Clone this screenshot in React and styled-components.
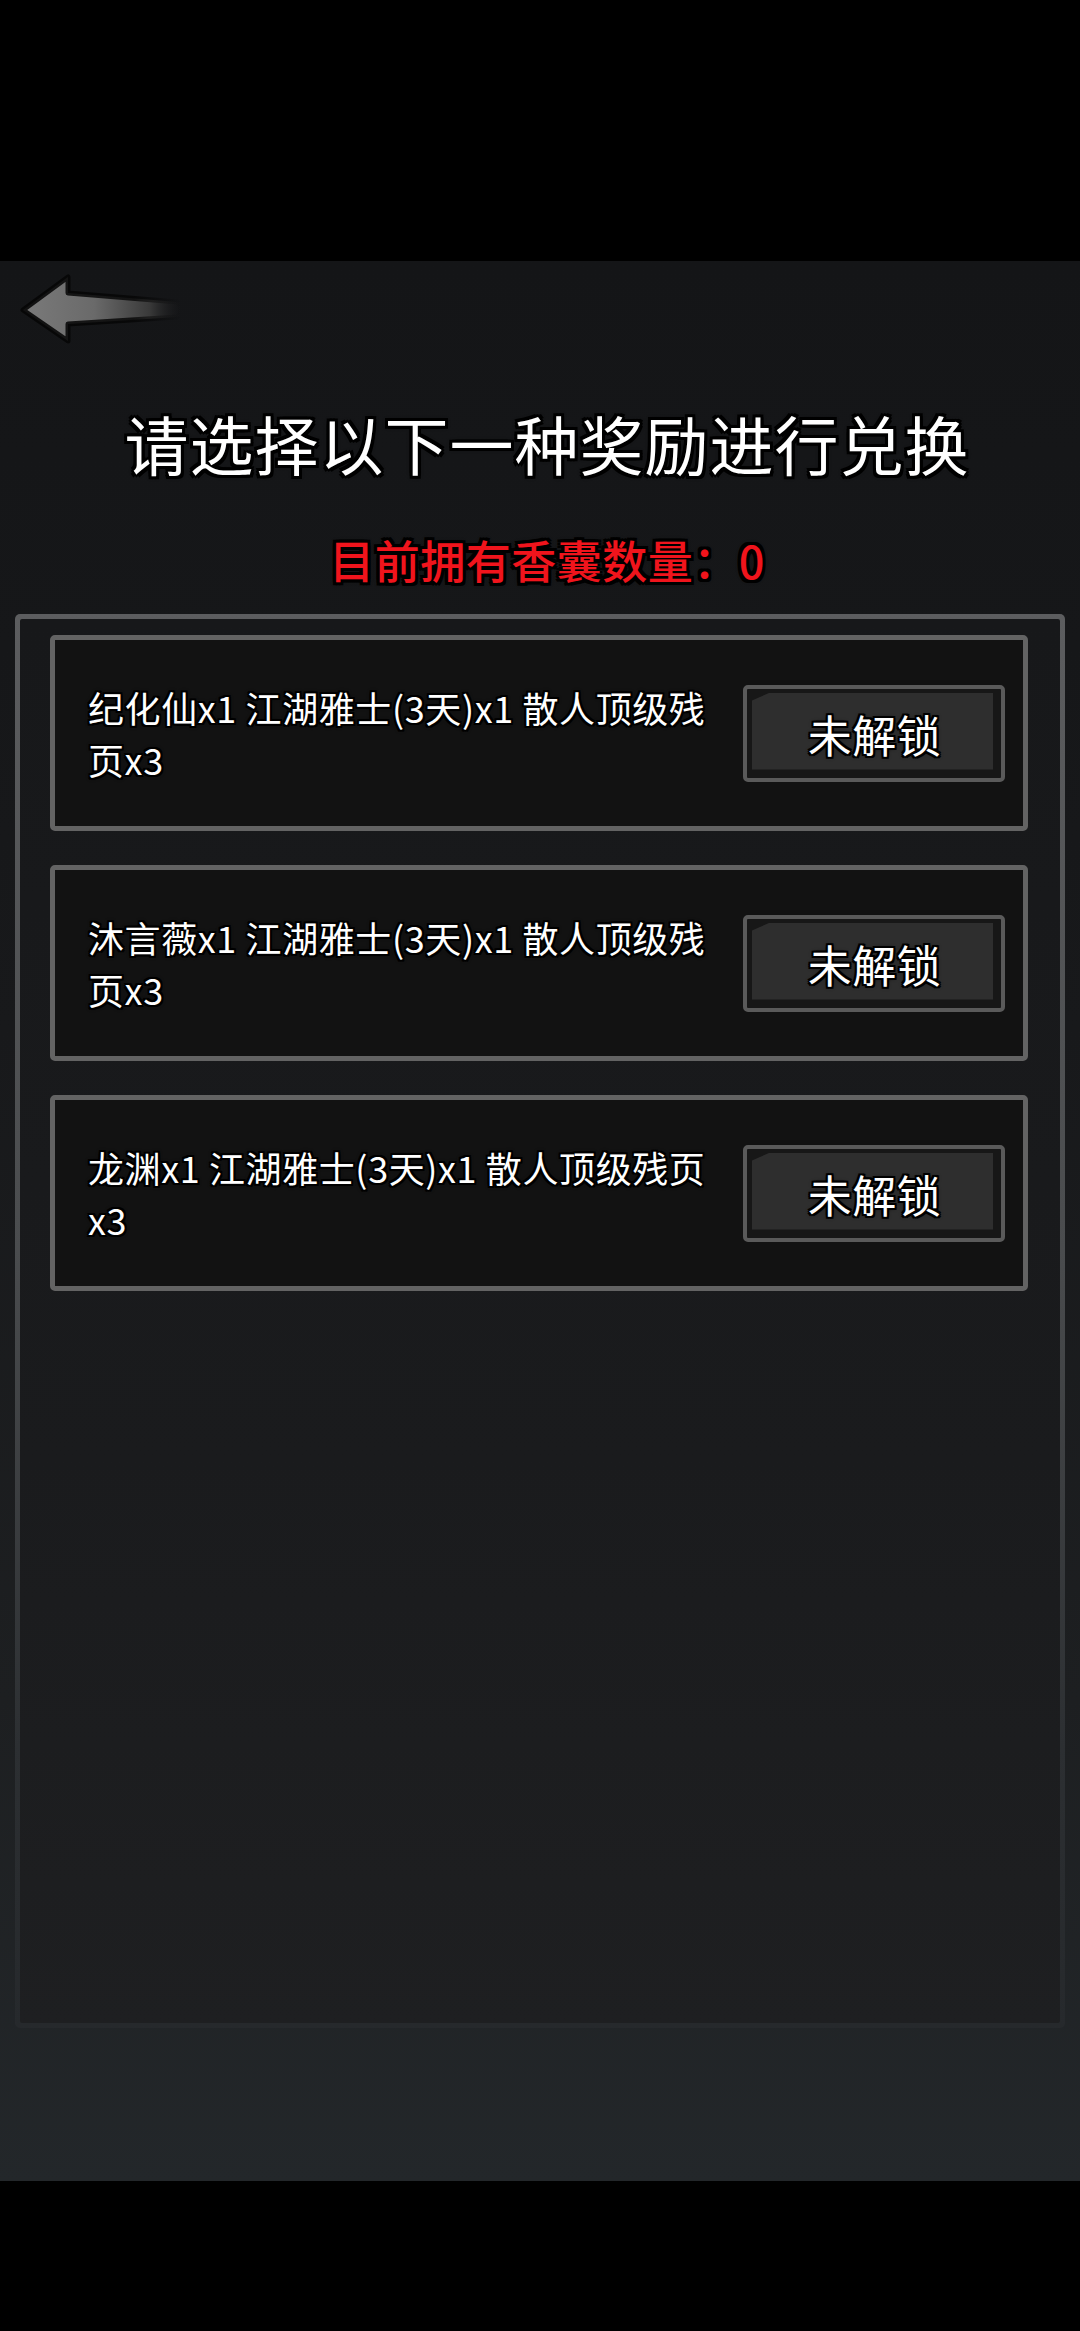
import React from "react";
import styled, { createGlobalStyle } from "styled-components";

const GlobalStyles = createGlobalStyle`
  html, body {
    margin: 0;
    padding: 0;
    background: #000;
  }
  body {
    font-family: "Noto Sans CJK SC", "Noto Sans", sans-serif;
  }
`;

const outline = (w, c = "#000") => `
  ${w}px 0 0 ${c}, -${w}px 0 0 ${c}, 0 ${w}px 0 ${c}, 0 -${w}px 0 ${c},
  ${w}px ${w}px 0 ${c}, -${w}px ${w}px 0 ${c}, ${w}px -${w}px 0 ${c}, -${w}px -${w}px 0 ${c},
  0 0 ${w + 2}px ${c}
`;

const Screen = styled.div`
  width: 1080px;
  height: 2331px;
  display: flex;
  flex-direction: column;
  background: #000;
  overflow: hidden;
`;

const Bar = styled.div`
  height: ${(p) => p.h}px;
  flex: none;
  background: #000;
`;

const Content = styled.div`
  height: 1920px;
  flex: none;
  display: flex;
  flex-direction: column;
  align-items: center;
  background: linear-gradient(180deg, #141517 0%, #18191b 40%, #1d1f21 75%, #23272a 100%);
`;

const Header = styled.div`
  align-self: stretch;
  height: 100px;
  display: flex;
  align-items: flex-start;
`;

const BackButton = styled.button`
  border: 0;
  padding: 0;
  background: none;
  cursor: pointer;
  width: 200px;
  height: 100px;
`;

const Title = styled.h1`
  margin: 41px 0 0 14px;
  font-size: 64px;
  line-height: 80px;
  font-weight: 400;
  color: #fff;
  letter-spacing: 1px;
  text-shadow: ${outline(3)};
`;

const Count = styled.div`
  margin: 48px 0 0 14px;
  font-size: 45px;
  line-height: 60px;
  font-weight: 500;
  color: #f0141c;
  letter-spacing: 0.5px;
  text-shadow: ${outline(3)};
`;

const FrameBorder = styled.div`
  margin-top: 24px;
  width: 1050px;
  height: 1414px;
  box-sizing: border-box;
  padding: 5px;
  border-radius: 5px;
  background: linear-gradient(180deg, #5c5d5f 0%, #4a4c4e 45%, #2c2f32 80%, #26292c 100%);
`;

const Frame = styled.div`
  height: 100%;
  box-sizing: border-box;
  border-radius: 2px;
  padding: 16px 0 0 30px;
  display: flex;
  flex-direction: column;
  gap: 34px;
  background: linear-gradient(180deg, #17181a 0%, #1a1b1d 60%, #1e1f21 100%);
`;

const Card = styled.div`
  width: 978px;
  height: 196px;
  box-sizing: border-box;
  border: 5px solid #636363;
  border-radius: 5px;
  background: #121212;
  display: flex;
  align-items: center;
  justify-content: space-between;
  padding: 0 18px 0 33px;
`;

const Desc = styled.div`
  width: 650px;
  font-size: 36px;
  line-height: 52px;
  letter-spacing: 0.6px;
  color: #fff;
  text-shadow: ${outline(2)};
`;

const LockButton = styled.button`
  width: 262px;
  height: 97px;
  box-sizing: border-box;
  border: 4px solid #5a5a5a;
  border-radius: 5px;
  background: #171717;
  padding: 4px 8px 8px 5px;
  display: flex;
  font-family: inherit;
`;

const LockFace = styled.span`
  flex: 1;
  display: flex;
  align-items: center;
  justify-content: center;
  padding: 6px 0 0 4px;
  background: #2e2e2e;
  clip-path: polygon(18px 0, 100% 0, 100% 100%, 0 100%, 0 8px);
  font-size: 44px;
  letter-spacing: 0.5px;
  color: #fff;
  text-shadow: ${outline(2)};
`;

const BackArrow = () => (
  <svg width="200" height="100" viewBox="0 0 200 100">
    <defs>
      <linearGradient id="shaft" x1="0" y1="0" x2="1" y2="0">
        <stop offset="0" stopColor="#7a7a7a" />
        <stop offset="0.45" stopColor="#6a6a6a" />
        <stop offset="0.8" stopColor="#3a3a3a" />
        <stop offset="1" stopColor="#1c1c1e" stopOpacity="0" />
      </linearGradient>
      <linearGradient id="edge" x1="0" y1="0" x2="1" y2="0">
        <stop offset="0" stopColor="#050505" stopOpacity="0.9" />
        <stop offset="0.7" stopColor="#050505" stopOpacity="0.8" />
        <stop offset="1" stopColor="#050505" stopOpacity="0" />
      </linearGradient>
    </defs>
    <path
      d="M23 49 L68 16 L68 32 L178 41 Q184 48 178 56 L68 63 L68 80 Z"
      fill="url(#shaft)"
      stroke="url(#edge)"
      strokeWidth="5"
      strokeLinejoin="round"
    />
  </svg>
);

const rewards = [
  "纪化仙x1 江湖雅士(3天)x1 散人顶级残页x3",
  "沐言薇x1 江湖雅士(3天)x1 散人顶级残页x3",
  "龙渊x1 江湖雅士(3天)x1 散人顶级残页x3",
];

export default function App() {
  return (
    <Screen>
      <GlobalStyles />
      <Bar h={261} />
      <Content>
        <Header>
          <BackButton aria-label="返回">
            <BackArrow />
          </BackButton>
        </Header>
        <Title>请选择以下一种奖励进行兑换</Title>
        <Count>目前拥有香囊数量：0</Count>
        <FrameBorder>
          <Frame>
            {rewards.map((text, i) => (
              <Card key={i}>
                <Desc>{text}</Desc>
                <LockButton>
                  <LockFace>未解锁</LockFace>
                </LockButton>
              </Card>
            ))}
          </Frame>
        </FrameBorder>
      </Content>
      <Bar h={150} />
    </Screen>
  );
}
